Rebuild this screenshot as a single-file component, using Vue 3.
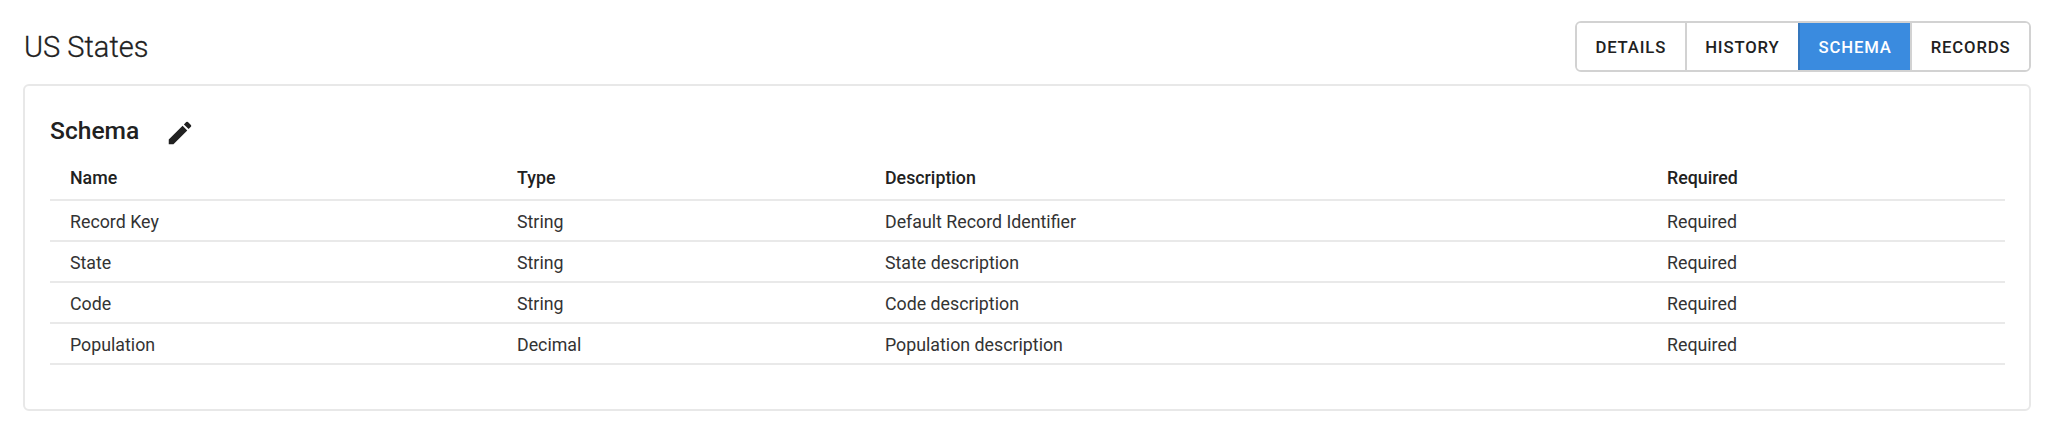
<script setup>
const rows = [
  { name: 'Record Key', type: 'String', description: 'Default Record Identifier', required: 'Required' },
  { name: 'State', type: 'String', description: 'State description', required: 'Required' },
  { name: 'Code', type: 'String', description: 'Code description', required: 'Required' },
  { name: 'Population', type: 'Decimal', description: 'Population description', required: 'Required' },
]
const tabs = ['DETAILS', 'HISTORY', 'SCHEMA', 'RECORDS']
</script>

<template>
  <div class="page">
    <header class="top">
      <h1 class="title">US States</h1>
      <div class="tabs">
        <button v-for="t in tabs" :key="t" class="tab" :class="{ active: t === 'SCHEMA' }">{{ t }}</button>
      </div>
    </header>
    <section class="card">
      <div class="head">
        <h2 class="sub">Schema</h2>
        <svg class="pencil" viewBox="0 0 24 24" width="30" height="30" fill="#212121">
          <path d="M3 17.25V21h3.75L17.81 9.94l-3.75-3.75L3 17.25zM20.71 7.04a1 1 0 0 0 0-1.41l-2.34-2.34a1 1 0 0 0-1.41 0l-1.83 1.83 3.75 3.75 1.83-1.83z" />
        </svg>
      </div>
      <table class="table">
        <colgroup>
          <col class="c1" /><col class="c2" /><col class="c3" /><col class="c4" />
        </colgroup>
        <thead>
          <tr><th>Name</th><th>Type</th><th>Description</th><th>Required</th></tr>
        </thead>
        <tbody>
          <tr v-for="r in rows" :key="r.name">
            <td>{{ r.name }}</td><td>{{ r.type }}</td><td>{{ r.description }}</td><td>{{ r.required }}</td>
          </tr>
        </tbody>
      </table>
    </section>
  </div>
</template>

<style>
html, body { margin: 0; background: #fff; }
</style>

<style scoped>
.page {
  box-sizing: border-box;
  width: 2048px;
  height: 425px;
  padding: 21px 17px 0 23px;
  font-family: Roboto, "Liberation Sans", sans-serif;
  color: #212121;
  background: #fff;
  overflow: hidden;
}
.top {
  display: flex;
  justify-content: space-between;
  align-items: center;
  height: 51px;
}
.title {
  margin: 0 0 0 1px;
  font-size: 29px;
  font-weight: 300;
  line-height: 48px;
  color: #212121;
  -webkit-text-stroke: 0.3px #212121;
}
.tabs {
  display: flex;
  height: 51px;
  box-sizing: border-box;
  border: 2px solid #d2d2d2;
  border-radius: 6px;
  overflow: hidden;
}
.tab {
  box-sizing: border-box;
  height: 47px;
  padding: 2px 18.5px 0;
  border: 0;
  border-left: 2px solid #d2d2d2;
  background: #fff;
  color: #212121;
  font-family: inherit;
  font-size: 16.7px;
  font-weight: 500;
  letter-spacing: 0.85px;
}
.tab:first-child { border-left: 0; }
.tab.active {
  background: #3a8bdf;
  color: #fff;
  border-left-color: #3577bd;
}
.card {
  box-sizing: border-box;
  margin-top: 12px;
  height: 327px;
  padding: 24px 24px 0 25px;
  border: 2px solid #e8e8e8;
  border-radius: 6px;
}
.head {
  display: flex;
  align-items: flex-start;
  gap: 26px;
  height: 49px;
}
.sub {
  margin: 0;
  font-size: 24.6px;
  font-weight: 500;
  line-height: 42px;
  color: #212121;
}
.pencil { display: block; margin-top: 8px; }
.table {
  width: 100%;
  table-layout: fixed;
  border-collapse: collapse;
  font-size: 17.8px;
}
.c1 { width: 447px; }
.c2 { width: 368px; }
.c3 { width: 782px; }
th, td {
  box-sizing: border-box;
  height: 41px;
  padding: 2px 20px 0;
  text-align: left;
  border-bottom: 2px solid #e9e9e9;
}
th { font-weight: 500; color: #212121; padding: 0 20px 3px; }
td { font-weight: 400; color: #333; }
</style>
